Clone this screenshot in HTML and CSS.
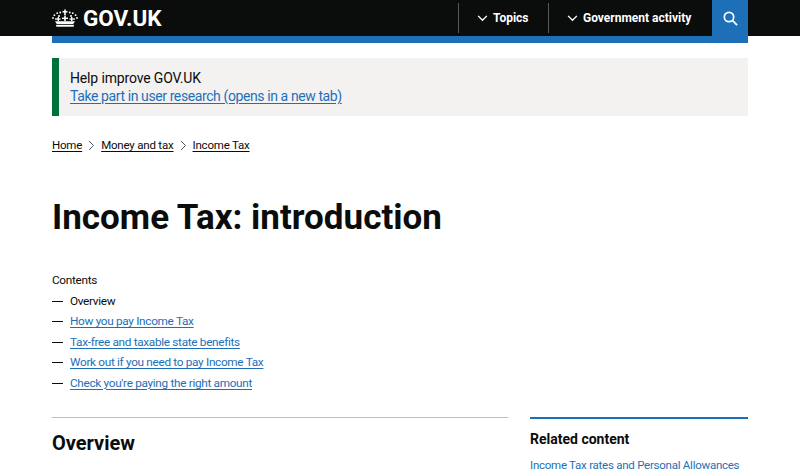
FILE: index.html
```html
<!DOCTYPE html>
<html lang="en">
<head>
<meta charset="utf-8">
<title>Income Tax: introduction - GOV.UK</title>
<link rel="stylesheet" href="styles.css">
</head>
<body>
<header class="site-header">
  <div class="wrap header-row">
    <a class="logo" href="#">
      <svg class="crown" viewBox="0 0 26 18" width="26" height="18" aria-hidden="true">
        <g fill="#fff">
          <rect x="12.2" y="0.5" width="1.6" height="6"/>
          <rect x="10.5" y="2" width="5" height="1.5"/>
          <circle cx="8.2" cy="3.5" r="0.9"/><circle cx="17.8" cy="3.5" r="0.9"/>
          <circle cx="5.2" cy="4.2" r="0.9"/><circle cx="20.8" cy="4.2" r="0.9"/>
          <circle cx="2.4" cy="6.2" r="0.9"/><circle cx="23.6" cy="6.2" r="0.9"/>
          <circle cx="1" cy="9" r="0.9"/><circle cx="25" cy="9" r="0.9"/>
          <circle cx="7" cy="7" r="1"/><circle cx="19" cy="7" r="1"/>
          <rect x="5.6" y="8" width="1.4" height="4"/>
          <rect x="12.2" y="7" width="1.6" height="5"/>
          <rect x="19" y="8" width="1.4" height="4"/>
          <rect x="10" y="8.6" width="6" height="1.4"/>
          <rect x="3" y="9.4" width="5.5" height="1.3"/>
          <rect x="17.5" y="9.4" width="5.5" height="1.3"/>
          <path d="M3 12.2 L23 12.2 L21.2 15 L4.8 15 Z"/>
          <rect x="4.2" y="15.8" width="17.6" height="1.9"/>
        </g>
      </svg>
      <span class="logo-text">GOV.UK</span>
    </a>
    <nav class="nav">
      <a class="nav-item nav-topics" href="#">
        <svg class="chev" viewBox="0 0 12 8" width="11" height="7" aria-hidden="true"><path d="M1 1l5 5 5-5" fill="none" stroke="#fff" stroke-width="1.6"/></svg>
        Topics
      </a>
      <a class="nav-item nav-gov" href="#">
        <svg class="chev" viewBox="0 0 12 8" width="11" height="7" aria-hidden="true"><path d="M1 1l5 5 5-5" fill="none" stroke="#fff" stroke-width="1.6"/></svg>
        Government activity
      </a>
      <a class="search" href="#" aria-label="Search">
        <svg viewBox="0 0 16 16" width="15" height="15" aria-hidden="true"><circle cx="6.4" cy="6.4" r="5" fill="none" stroke="#fff" stroke-width="1.8"/><path d="M10 10l5 5" stroke="#fff" stroke-width="2" fill="none"/></svg>
      </a>
    </nav>
  </div>
</header>
<div class="wrap">
  <div class="blue-bar"></div>
  <aside class="banner">
    <div class="banner-head">Help improve GOV.UK</div>
    <a class="banner-link" href="#">Take part in user research (opens in a new tab)</a>
  </aside>
  <nav class="crumbs">
    <a href="#">Home</a>
    <svg class="sep" viewBox="0 0 7 11" width="7" height="11" aria-hidden="true"><path d="M1 1l4.500 4.500-4.500 4.500" fill="none" stroke="#505a5f" stroke-width="1"/></svg>
    <a href="#">Money and tax</a>
    <svg class="sep" viewBox="0 0 7 11" width="7" height="11" aria-hidden="true"><path d="M1 1l4.500 4.500-4.500 4.500" fill="none" stroke="#505a5f" stroke-width="1"/></svg>
    <a href="#">Income Tax</a>
  </nav>
  <h1 class="title">Income Tax: introduction</h1>
  <nav class="contents">
    <div class="contents-head">Contents</div>
    <ul class="contents-list">
      <li>Overview</li>
      <li><a href="#">How you pay Income Tax</a></li>
      <li><a href="#">Tax-free and taxable state benefits</a></li>
      <li><a href="#">Work out if you need to pay Income Tax</a></li>
      <li><a href="#">Check you're paying the right amount</a></li>
    </ul>
  </nav>
  <div class="columns">
    <main class="main-col">
      <h2 class="section-title">Overview</h2>
    </main>
    <aside class="side-col">
      <h2 class="side-title">Related content</h2>
      <a class="side-link" href="#">Income Tax rates and Personal Allowances</a>
    </aside>
  </div>
</div>
</body>
</html>
```
FILE: styles.css
```css
* { box-sizing: border-box; }
html, body { margin: 0; padding: 0; height: 470px; overflow: hidden; }
body { background: #fff; color: #0b0c0c; font-family: "Roboto", "Liberation Sans", sans-serif; }
a { color: #1d70b8; text-underline-offset: 2px; }
.wrap { width: 696px; margin: 0 auto; }
.site-header { background: #0b0c0c; height: 36px; }
.header-row { display: flex; justify-content: space-between; height: 36px; }
.logo { display: flex; align-items: center; gap: 5px; color: #fff; text-decoration: none; }
.crown { display: block; }
.logo-text { font-size: 22.500px; font-weight: 700; line-height: 36px; }
.nav { display: flex; align-items: stretch; }
.nav-item { display: flex; align-items: center; gap: 5px; height: 30px; margin-top: 3px; padding-left: 18px; color: #fff; font-size: 12px; font-weight: 700; text-decoration: none; border-left: 1px solid #505a5f; }
.nav-topics { width: 90px; }
.nav-gov { width: 164px; }
.search { display: flex; align-items: center; justify-content: center; width: 36px; height: 36px; background: #1d70b8; }
.blue-bar { height: 7px; background: #1d70b8; }
.banner { margin-top: 15px; height: 58px; padding: 11px 0 0 11px; background: #f3f2f1; border-left: 7px solid #00703c; font-size: 14px; line-height: 18px; }
.banner-head { letter-spacing: -0.15px; }
.banner-link { letter-spacing: -0.4px; }
.crumbs { display: flex; align-items: center; gap: 6px; margin-top: 21px; font-size: 11.500px; letter-spacing: -0.2px; line-height: 16px; }
.crumbs a { color: #0b0c0c; }
.title { margin: 45px 0 0; font-size: 35px; font-weight: 700; line-height: 40px; }
.contents { margin-top: 34px; font-size: 11.800px; letter-spacing: -0.32px; line-height: 16px; }
.contents-head { margin-bottom: 4.600px; }
.contents-list { list-style: none; margin: 0; padding: 0; display: flex; flex-direction: column; gap: 4.600px; }
.contents-list li { padding-left: 18px; display: flex; align-items: center; position: relative; }
.contents-list li::before { content: ""; position: absolute; left: 0; top: 8px; width: 11px; height: 1px; background: #0b0c0c; }
.columns { display: flex; gap: 22px; margin-top: 26px; }
.main-col { width: 456px; border-top: 1px solid #bbbdbf; }
.side-col { width: 218px; border-top: 2px solid #1d70b8; }
.section-title { margin: 13px 0 0; font-size: 20px; font-weight: 700; line-height: 24px; }
.side-title { margin: 11px 0 0; font-size: 14px; font-weight: 700; line-height: 18px; }
.side-link { display: block; margin-top: 9px; font-size: 11.500px; letter-spacing: -0.25px; line-height: 16px; text-decoration: none; white-space: nowrap; }
```
